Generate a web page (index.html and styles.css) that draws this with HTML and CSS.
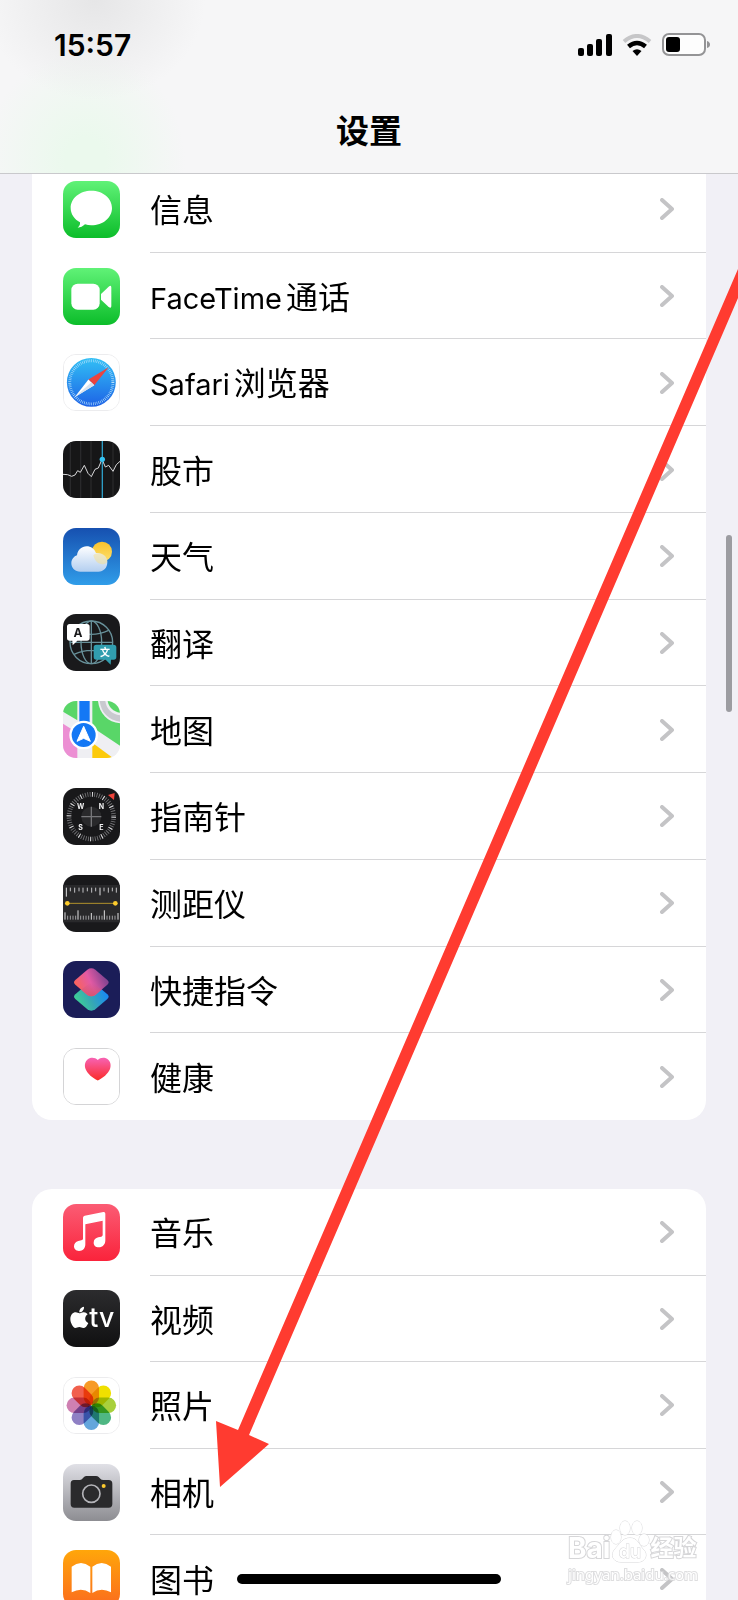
FILE: index.html
```html
<!DOCTYPE html>
<html lang="zh-CN">

<head>
    <meta charset="UTF-8">
    <meta name="viewport" content="width=device-width, initial-scale=1.0">
    <title>设置</title>
    <link rel="stylesheet" href="styles.css">
</head>

<body>
    <header class="header">
        <div class="status">
            <span class="time">15:57</span>
            <div class="status-icons">
                <svg width="34" height="22" viewBox="0 0 34 22">
                    <rect x="0" y="14" width="6" height="8" rx="2" />
                    <rect x="9" y="10" width="6" height="12" rx="2" />
                    <rect x="18" y="5" width="6" height="17" rx="2" />
                    <rect x="28" y="0" width="6" height="22" rx="2" />
                </svg>
                <svg width="30" height="22" viewBox="0 0 30 22">
                    <path d="M2 7.500Q15 -3.500 28 7.500" fill="none" stroke="#c6c6c8" stroke-width="4" />
                    <path d="M6.500 12.500Q15 5.500 23.500 12.500" fill="none" stroke="#000" stroke-width="4.500" />
                    <path d="M10.500 17Q15 13.500 19.500 17L15 22z" />
                </svg>
                <svg width="49" height="24" viewBox="0 0 49 24">
                    <rect x="1" y="1" width="42" height="21" rx="6" fill="#fdfdfd" stroke="#949496" stroke-width="2" />
                    <rect x="4" y="4" width="14" height="15" rx="3" />
                    <path d="M45 8q3 1 3 3.500t-3 3.500z" fill="#949496" />
                </svg>
            </div>
        </div>
        <h1 class="title">设置</h1>
    </header>

    <main class="list">
        <nav class="group group-apps">
            <a class="row" href="#">
                <svg class="icon" viewBox="0 0 171 171">
                    <defs>
                        <linearGradient id="green" x1="0" y1="0" x2="0" y2="1">
                            <stop offset="0" stop-color="#60f277" />
                            <stop offset="1" stop-color="#0cbd2a" />
                        </linearGradient>
                    </defs>
                    <rect width="171" height="171" fill="url(#green)" />
                    <path d="M85 29c35 0 62 23 62 52s-27 52-62 52c-7 0-13-1-19-3-6 6-14 10-22 10 5-4 8-9 7-16C34 115 23 99 23 81c0-29 27-52 62-52z" fill="#fff" />
                </svg>
                <span class="label">信息</span>
                <svg class="arrow" viewBox="0 0 14 22"><path d="M2 2l10 9-10 9" /></svg>
            </a>
            <a class="row" href="#">
                <svg class="icon" viewBox="0 0 171 171">
                    <rect width="171" height="171" fill="url(#green)" />
                    <rect x="25" y="47" width="85" height="78" rx="19" fill="#fff" />
                    <path d="M114 78l23-22q8-6 8 3v55q0 9-8 3l-23-22z" fill="#fff" />
                </svg>
                <span class="label"><span class="latin">FaceTime</span>通话</span>
                <svg class="arrow" viewBox="0 0 14 22"><path d="M2 2l10 9-10 9" /></svg>
            </a>
            <a class="row" href="#">
                <svg class="icon icon-line-soft" viewBox="0 0 171 171">
                    <defs>
                        <linearGradient id="safari" x1="0" y1="0" x2="0" y2="1">
                            <stop offset="0" stop-color="#32c0f5" />
                            <stop offset="1" stop-color="#1d62e6" />
                        </linearGradient>
                    </defs>
                    <rect width="171" height="171" fill="#fff" />
                    <circle cx="85" cy="85" r="76" fill="url(#safari)" />
                    <circle cx="85" cy="85" r="67" fill="none" stroke="#b5e0fb" stroke-width="9" stroke-dasharray="2 3.700" />
                    <path d="M139 38L76 76l18 18z" fill="#ea4440" />
                    <path d="M33 131l43-55 18 18z" fill="#fff" />
                    <path d="M33 131l61-37-9-9z" fill="#d8e2ee" />
                </svg>
                <span class="label"><span class="latin">Safari</span>浏览器</span>
                <svg class="arrow" viewBox="0 0 14 22"><path d="M2 2l10 9-10 9" /></svg>
            </a>
            <a class="row" href="#">
                <svg class="icon" viewBox="0 0 171 171">
                    <defs>
                        <linearGradient id="black" x1="0" y1="0" x2="0" y2="1">
                            <stop offset="0" stop-color="#2c2c2e" />
                            <stop offset="1" stop-color="#101011" />
                        </linearGradient>
                    </defs>
                    <rect width="171" height="171" fill="#161617" />
                    <path d="M22 0v171M53 0v171M84 0v171M150 0v171" stroke="#29292b" stroke-width="4" />
                    <path d="M0 100l14 1 12 5 10-4 8-13 8 5 12-21 11 24 10 10 11-22 10-4 11-26 10 23 10-5 13 18 10-20 11-10" fill="none" stroke="#d8d8da" stroke-width="3" />
                    <path d="M118 0v171" stroke="#2d9cc4" stroke-width="4" />
                    <circle cx="118" cy="55" r="8" fill="#35c3f2" />
                </svg>
                <span class="label">股市</span>
                <svg class="arrow" viewBox="0 0 14 22"><path d="M2 2l10 9-10 9" /></svg>
            </a>
            <a class="row" href="#">
                <svg class="icon" viewBox="0 0 171 171">
                    <defs>
                        <linearGradient id="sky" x1="0" y1="0" x2="0" y2="1">
                            <stop offset="0" stop-color="#1650b0" />
                            <stop offset="1" stop-color="#309de9" />
                        </linearGradient>
                        <linearGradient id="sun" x1="0" y1="0" x2="0" y2="1">
                            <stop offset="0" stop-color="#f9c22c" />
                            <stop offset="1" stop-color="#fde06d" />
                        </linearGradient>
                        <linearGradient id="cloud" x1="0" y1="0" x2="0" y2="1">
                            <stop offset="0" stop-color="#fdfeff" />
                            <stop offset="1" stop-color="#b4cff0" />
                        </linearGradient>
                    </defs>
                    <rect width="171" height="171" fill="url(#sky)" />
                    <circle cx="117" cy="71" r="30" fill="url(#sun)" />
                    <path d="M52 131c-16 0-27-11-27-25 0-12 8-21 17-24 2-16 14-27 29-27 13 0 23 7 28 20 17-2 34 9 34 28 0 17-11 28-27 28z" fill="url(#cloud)" />
                    <path d="M91 82c14-12 42-6 42 20-13 14-36 6-42-20z" fill="#f8df8c" opacity="0.500" />
                </svg>
                <span class="label">天气</span>
                <svg class="arrow" viewBox="0 0 14 22"><path d="M2 2l10 9-10 9" /></svg>
            </a>
            <a class="row" href="#">
                <svg class="icon" viewBox="0 0 171 171">
                    <rect width="171" height="171" fill="#19191b" />
                    <g fill="none" stroke="#679099" stroke-width="4">
                        <circle cx="85" cy="85" r="64" />
                        <ellipse cx="85" cy="85" rx="31" ry="64" />
                        <path d="M85 21v128M21 85h128M33 49q52 24 104 0M33 121q52-24 104 0" />
                    </g>
                    <path d="M20 30h52q8 0 8 8v34q0 8-8 8H43L29 94l-1-14h-8q-8 0-8-8V38q0-8 8-8z" fill="#fff" />
                    <path d="M100 92h52q8 0 8 8v29q0 8-8 8h-8l-1 15-15-15h-28q-8 0-8-8v-29q0-8 8-8z" fill="#319eaf" />
                    <text class="glyph" x="45" y="68" font-size="36" fill="#19191b">A</text>
                    <text class="glyph" x="126" y="126" font-size="30" fill="#fff">文</text>
                </svg>
                <span class="label">翻译</span>
                <svg class="arrow" viewBox="0 0 14 22"><path d="M2 2l10 9-10 9" /></svg>
            </a>
            <a class="row" href="#">
                <svg class="icon" viewBox="0 0 171 171">
                    <rect width="171" height="171" fill="#efeff3" />
                    <path d="M0 0h43v58L0 32z" fill="#59d668" />
                    <path d="M88 0h17c4 38 30 64 66 67v67L88 79z" fill="#59d668" />
                    <path d="M134 0h37v35c-20-3-34-16-37-35z" fill="#59d668" />
                    <path d="M110 0c4 34 27 58 61 62V43c-24-3-41-19-44-43z" fill="#c9c9cf" />
                    <path d="M0 68l43 27v76H0z" fill="#ec8fd3" />
                    <path d="M88 125l62 46H88z" fill="#fcca0b" />
                    <path d="M49 0h31v80H49z" fill="#1478f5" />
                    <circle cx="62" cy="102" r="43" fill="#fff" />
                    <circle cx="62" cy="102" r="36" fill="#1478f5" />
                    <path d="M62 76l20 45-20-9-20 9z" fill="#fff" stroke="#fff" stroke-width="3" stroke-linejoin="round" />
                </svg>
                <span class="label">地图</span>
                <svg class="arrow" viewBox="0 0 14 22"><path d="M2 2l10 9-10 9" /></svg>
            </a>
            <a class="row" href="#">
                <svg class="icon" viewBox="0 0 171 171">
                    <rect width="171" height="171" fill="#18181a" />
                    <circle cx="85" cy="86" r="67" fill="none" stroke="#77777a" stroke-width="14" stroke-dasharray="2.500 4.517" />
                    <circle cx="85" cy="86" r="67" fill="none" stroke="#d8d8da" stroke-width="14" stroke-dasharray="3 32.080" />
                    <circle cx="85" cy="86" r="30" fill="#29292b" />
                    <path d="M85 56v60M55 86h60" stroke="#77777a" stroke-width="4" />
                    <path d="M155 15l-2 21-18-15z" fill="#f0433a" />
                    <g class="glyph" font-size="21" fill="#f4f4f5">
                        <text x="53" y="62">W</text>
                        <text x="115" y="62">N</text>
                        <text x="53" y="127">S</text>
                        <text x="115" y="127">E</text>
                    </g>
                </svg>
                <span class="label">指南针</span>
                <svg class="arrow" viewBox="0 0 14 22"><path d="M2 2l10 9-10 9" /></svg>
            </a>
            <a class="row" href="#">
                <svg class="icon" viewBox="0 0 171 171">
                    <rect width="171" height="171" fill="#19191b" />
                    <rect y="30" width="171" height="112" fill="#29292b" />
                    <path d="M10 38v27M111 38v23" stroke="#e0e0e2" stroke-width="3" />
                    <path d="M22 38v11M35 38v15M48 38v11M60 38v15M73 38v11M86 38v15M98 38v11M123 38v11M136 38v15M148 38v11M160 38v15" stroke="#c2c2c5" stroke-width="3" />
                    <path d="M6 112v22M45 106v28M85 114v20M124 106v28M165 114v20" stroke="#e0e0e2" stroke-width="3" />
                    <path d="M14 122v12M22 122v12M30 122v12M38 122v12M53 122v12M61 122v12M69 122v12M77 122v12M93 122v12M101 122v12M109 122v12M117 122v12M132 122v12M140 122v12M148 122v12M156 122v12" stroke="#a0a0a3" stroke-width="3" />
                    <path d="M13 85h144" stroke="#f7c72c" stroke-width="3" stroke-dasharray="4 2" />
                    <circle cx="13" cy="85" r="7" fill="#fccb2c" />
                    <circle cx="157" cy="85" r="7" fill="#fccb2c" />
                </svg>
                <span class="label">测距仪</span>
                <svg class="arrow" viewBox="0 0 14 22"><path d="M2 2l10 9-10 9" /></svg>
            </a>
            <a class="row" href="#">
                <svg class="icon" viewBox="0 0 171 171">
                    <defs>
                        <linearGradient id="cut-bottom" x1="0" y1="0.700" x2="1" y2="0.300">
                            <stop offset="0" stop-color="#3fd68f" />
                            <stop offset="0.450" stop-color="#36a8b4" />
                            <stop offset="1" stop-color="#1484ff" />
                        </linearGradient>
                        <linearGradient id="cut-top" x1="0.100" y1="0.700" x2="0.900" y2="0.400">
                            <stop offset="0" stop-color="#f8635e" />
                            <stop offset="0.500" stop-color="#e35aa4" />
                            <stop offset="1" stop-color="#8a4491" />
                        </linearGradient>
                        <linearGradient id="cut-mix" x1="0" y1="0" x2="0" y2="1">
                            <stop offset="0" stop-color="#c9568f" stop-opacity="0" />
                            <stop offset="1" stop-color="#d9536f" />
                        </linearGradient>
                    </defs>
                    <rect width="171" height="171" fill="#1b1d58" />
                    <path d="M73 69q12-8 24 0l36 31q8 7 0 14l-36 31q-12 8-24 0l-36-31q-8-7 0-14z" fill="url(#cut-bottom)" />
                    <path d="M73 26q12-8 24 0l36 31q8 7 0 14l-36 31q-12 8-24 0L37 71q-8-7 0-14z" fill="url(#cut-top)" />
                    <path d="M85 63l31 23-19 16q-12 8-24 0L54 86z" fill="url(#cut-mix)" />
                </svg>
                <span class="label">快捷指令</span>
                <svg class="arrow" viewBox="0 0 14 22"><path d="M2 2l10 9-10 9" /></svg>
            </a>
            <a class="row" href="#">
                <svg class="icon icon-line" viewBox="0 0 171 171">
                    <defs>
                        <linearGradient id="heart" x1="0" y1="0" x2="0" y2="1">
                            <stop offset="0" stop-color="#f763b5" />
                            <stop offset="1" stop-color="#fb2a26" />
                        </linearGradient>
                    </defs>
                    <rect width="171" height="171" fill="#fff" />
                    <path d="M105 34c8-9 22-9 30-3 10 7 12 20 8 31-6 15-22 28-38 36-16-8-32-21-38-36-4-11-2-24 8-31 8-6 22-6 30 3z" fill="url(#heart)" />
                </svg>
                <span class="label">健康</span>
                <svg class="arrow" viewBox="0 0 14 22"><path d="M2 2l10 9-10 9" /></svg>
            </a>
        </nav>

        <nav class="group group-media">
            <a class="row" href="#">
                <svg class="icon" viewBox="0 0 171 171">
                    <defs>
                        <linearGradient id="music" x1="0" y1="0" x2="0" y2="1">
                            <stop offset="0" stop-color="#fb5c74" />
                            <stop offset="1" stop-color="#fa233b" />
                        </linearGradient>
                    </defs>
                    <rect width="171" height="171" fill="url(#music)" />
                    <path d="M65 35l56-11q6-1 6 5v80c0 13-8 21-20 21-9 0-15-6-15-14 0-9 6-14 14-16l9-2q4-1 4-5V50L67 61v60c0 13-8 20-19 20-9 0-15-6-15-14 0-8 5-14 13-16l9-2q5-1 5-5V41q0-5 5-6z" fill="#fff" />
                </svg>
                <span class="label">音乐</span>
                <svg class="arrow" viewBox="0 0 14 22"><path d="M2 2l10 9-10 9" /></svg>
            </a>
            <a class="row" href="#">
                <svg class="icon" viewBox="0 0 171 171">
                    <rect width="171" height="171" fill="url(#black)" />
                    <path d="M63 50c1 9-6 17-14 17-1-9 6-16 14-17z" fill="#fff" />
                    <path d="M49 70c4 0 8-4 14-3 4 0 8 2 11 6-11 7-9 22 2 26-4 9-9 15-15 15-5 0-7-3-12-3s-8 3-12 3c-7-1-15-16-15-27 0-12 8-20 16-20 5 0 8 3 11 3z" fill="#fff" />
                    <text class="tv" x="79" y="112" font-size="80" fill="#fff">tv</text>
                </svg>
                <span class="label">视频</span>
                <svg class="arrow" viewBox="0 0 14 22"><path d="M2 2l10 9-10 9" /></svg>
            </a>
            <a class="row" href="#">
                <svg class="icon icon-line-soft" viewBox="0 0 171 171">
                    <rect width="171" height="171" fill="#fff" />
                    <g class="petals">
                        <rect x="61" y="8" width="48" height="76" rx="24" fill="#f79a26" />
                        <rect x="61" y="8" width="48" height="76" rx="24" fill="#f0e000" transform="rotate(45 85 85)" />
                        <rect x="61" y="8" width="48" height="76" rx="24" fill="#a8d03c" transform="rotate(90 85 85)" />
                        <rect x="61" y="8" width="48" height="76" rx="24" fill="#4fb783" transform="rotate(135 85 85)" />
                        <rect x="61" y="8" width="48" height="76" rx="24" fill="#64a6dc" transform="rotate(180 85 85)" />
                        <rect x="61" y="8" width="48" height="76" rx="24" fill="#8f80c4" transform="rotate(225 85 85)" />
                        <rect x="61" y="8" width="48" height="76" rx="24" fill="#cf80b2" transform="rotate(270 85 85)" />
                        <rect x="61" y="8" width="48" height="76" rx="24" fill="#f1604d" transform="rotate(315 85 85)" />
                    </g>
                </svg>
                <span class="label">照片</span>
                <svg class="arrow" viewBox="0 0 14 22"><path d="M2 2l10 9-10 9" /></svg>
            </a>
            <a class="row" href="#">
                <svg class="icon" viewBox="0 0 171 171">
                    <defs>
                        <linearGradient id="silver" x1="0" y1="0" x2="0" y2="1">
                            <stop offset="0" stop-color="#e0e0e6" />
                            <stop offset="1" stop-color="#8d8d92" />
                        </linearGradient>
                    </defs>
                    <rect width="171" height="171" fill="url(#silver)" />
                    <path d="M33 48h16q6 0 9-4l5-5q3-3 8-3h28q5 0 8 3l5 5q3 4 9 4h16q11 0 11 11v61q0 11-11 11H34q-11 0-11-11V59q0-11 10-11z" fill="#2a2a2c" />
                    <circle cx="85" cy="89" r="26" fill="none" stroke="#b3b3b8" stroke-width="5" />
                    <circle cx="122" cy="66" r="6" fill="#fbc92f" />
                </svg>
                <span class="label">相机</span>
                <svg class="arrow" viewBox="0 0 14 22"><path d="M2 2l10 9-10 9" /></svg>
            </a>
            <a class="row" href="#">
                <svg class="icon" viewBox="0 0 171 171">
                    <defs>
                        <linearGradient id="books" x1="0" y1="0" x2="0" y2="1">
                            <stop offset="0" stop-color="#ffa60a" />
                            <stop offset="1" stop-color="#fb6b1e" />
                        </linearGradient>
                    </defs>
                    <rect width="171" height="171" fill="url(#books)" />
                    <path d="M26 50q28-22 56 0v79q-26-18-56-2z" fill="#fff" />
                    <path d="M88 50q28-22 56 0v77q-30-16-56 2z" fill="#fff" />
                </svg>
                <span class="label">图书</span>
                <svg class="arrow" viewBox="0 0 14 22"><path d="M2 2l10 9-10 9" /></svg>
            </a>
        </nav>
    </main>

    <div class="scrollbar"></div>
    <div class="home-bar"></div>

    <div class="watermark">
        <div class="brand">
            <span class="brand-bai">Bai</span>
            <svg class="paw" width="40" height="44" viewBox="0 0 40 44">
                <ellipse cx="6" cy="17" rx="5" ry="7" />
                <ellipse cx="15" cy="8" rx="5" ry="7" />
                <ellipse cx="27" cy="8" rx="5" ry="7" />
                <ellipse cx="34" cy="20" rx="5" ry="6" />
                <path d="M20 18c8 0 9 7 13 11 6 6 2 13-5 13H11c-8 0-11-7-6-13 5-5 7-11 15-11z" />
                <text x="20" y="38">du</text>
            </svg>
            <span class="brand-name">经验</span>
        </div>
        <span class="site">jingyan.baidu.com</span>
    </div>

    <!-- 指向“相机”的红色箭头 -->
    <svg class="pointer" viewBox="0 0 738 1600" preserveAspectRatio="none">
        <path d="M738 269L238 1430l-22-9 4 66 49-43-20-9L738 298z" fill="#ff3b30" />
    </svg>
</body>

</html>
```

FILE: styles.css
```css
* {
    margin: 0;
    padding: 0;
    box-sizing: border-box;
}

body {
    position: relative;
    height: 100vh;
    overflow: hidden;
    background-color: #f1f0f6;
    color: #000;
    font-family: Inter, "Noto Sans CJK SC", sans-serif;
}

/* 顶部状态栏和标题 */
.header {
    position: relative;
    z-index: 1;
    height: 174px;
    padding-top: 25px;
    border-bottom: 1px solid #c9c9cc;
    background: radial-gradient(ellipse 110px 100px at 95px 0, #e6e6e7, rgba(230, 230, 231, 0)),
        radial-gradient(ellipse 100px 110px at 85px 160px, #ebf9ed 20%, rgba(235, 249, 237, 0)),
        #f6f6f7;
}

.status {
    display: flex;
    justify-content: space-between;
    align-items: center;
    height: 40px;
    padding: 0 27px 0 54px;
}

.time {
    font-size: 30px;
    font-weight: 600;
}

.status-icons {
    display: flex;
    align-items: center;
    gap: 10px;
}

.title {
    margin-top: 42px;
    line-height: 48px;
    text-align: center;
    font-size: 33px;
    font-weight: 600;
}

/* 设置列表 */
.list {
    display: flex;
    flex-direction: column;
    gap: 69px;
    /* 第一行有一部分滚动到标题下面 */
    margin-top: -8px;
    padding: 0 32px;
}

.group {
    display: grid;
    grid-auto-rows: 1fr;
    overflow: hidden;
    border-radius: 20px;
    background-color: #fff;
}

.group-apps {
    min-height: 954px;
    border-radius: 0 0 20px 20px;
}

.group-media {
    min-height: 433px;
}

.row {
    display: grid;
    grid-template-columns: 57px 1fr 14px;
    column-gap: 30px;
    align-items: center;
    padding: 0 32px 0 31px;
    color: #000;
    text-decoration: none;
    /* 分隔线从文字处开始 */
    background: linear-gradient(#d6d6d8, #d6d6d8) 118px 100% / 100% 1px no-repeat;
}

.row:last-child {
    background: none;
}

.icon {
    width: 57px;
    height: 57px;
    border-radius: 13px;
}

.icon-line {
    border: 1px solid #d4d4d6;
}

.icon-line-soft {
    border: 1px solid #ececee;
}

.label {
    padding-top: 4px;
    font-size: 32px;
    line-height: 48px;
}

.latin {
    margin-right: 4px;
    font-size: 29px;
}

.arrow {
    width: 14px;
    height: 22px;
    fill: none;
    stroke: #c4c4c6;
    stroke-width: 4;
    stroke-linecap: round;
    stroke-linejoin: round;
}

.glyph {
    font-weight: 700;
    text-anchor: middle;
}

.tv {
    font-weight: 500;
}

.petals {
    isolation: isolate;
}

.petals rect {
    mix-blend-mode: multiply;
}

/* 浮在列表上面的元素 */
.scrollbar {
    position: absolute;
    z-index: 2;
    top: 535px;
    right: 6px;
    width: 6px;
    height: 177px;
    border-radius: 3px;
    background-color: #9c9ca1;
}

.home-bar {
    position: absolute;
    z-index: 2;
    bottom: 16px;
    left: 50%;
    width: 264px;
    height: 10px;
    margin-left: -132px;
    border-radius: 5px;
    background-color: #000;
}

.pointer {
    position: absolute;
    z-index: 3;
    top: 0;
    left: 0;
    width: 100%;
    height: 100%;
    pointer-events: none;
}

.watermark {
    position: absolute;
    z-index: 2;
    right: 40px;
    bottom: 16px;
    color: #fff;
    -webkit-text-stroke: 2px #d6d6d8;
    paint-order: stroke fill;
    pointer-events: none;
}

.brand {
    display: flex;
    align-items: flex-end;
    height: 44px;
    line-height: 32px;
}

.brand-bai {
    font-size: 28px;
    font-weight: 700;
}

.brand-name {
    font-size: 23px;
    font-weight: 700;
}

.paw {
    fill: #fff;
    stroke: #d6d6d8;
}

.paw text {
    font-size: 18px;
    font-weight: 600;
    text-anchor: middle;
}

.site {
    display: block;
    line-height: 20px;
    font-family: "Noto Sans", sans-serif;
    font-size: 15px;
    opacity: 0.8;
}
```
